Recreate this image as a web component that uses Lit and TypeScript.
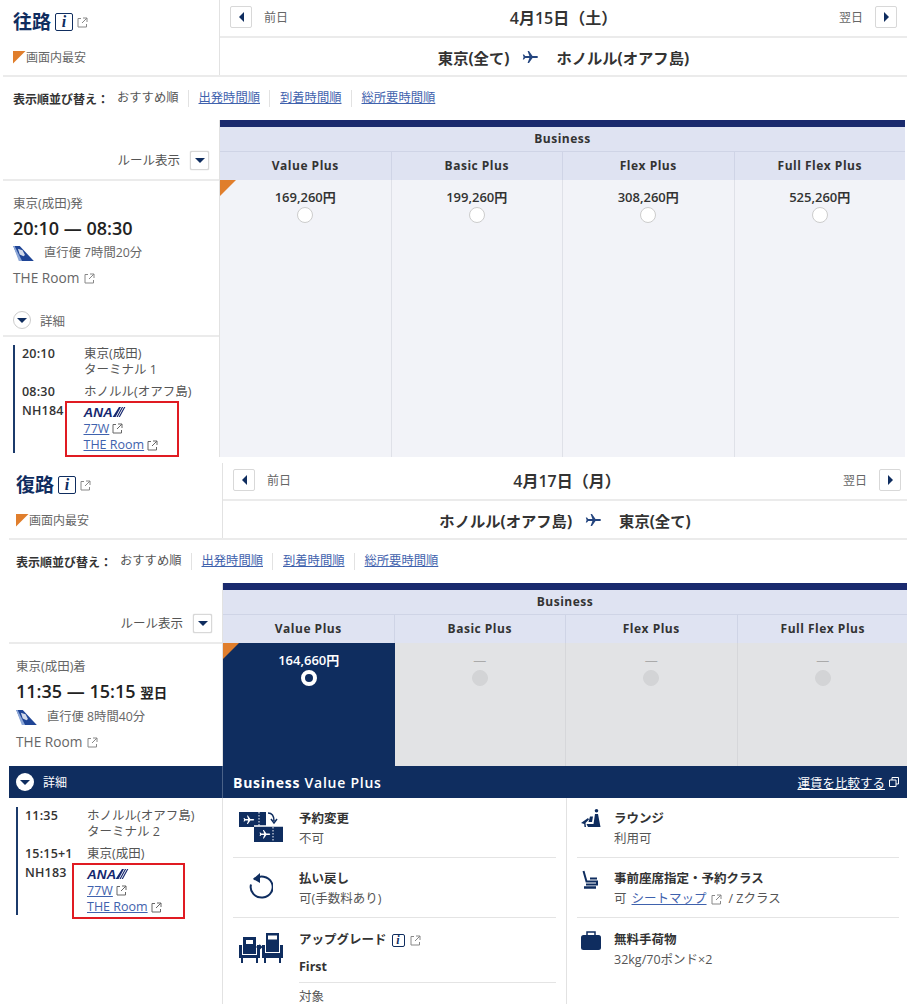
import { LitElement, html, css, svg } from "lit";
import { customElement } from "lit/decorators.js";

const ext = () => html`<svg class="ext" viewBox="0 0 11 11"><path d="M4 1.500H1v8.500h8.500V7M6 1h4v4M10 1L5 6" fill="none" stroke="#888" stroke-width="1"/></svg>`;
const extLink = () => html`<svg class="ext" viewBox="0 0 11 11"><path d="M4 1.500H1v8.500h8.500V7M6 1h4v4M10 1L5 6" fill="none" stroke="#666" stroke-width="1"/></svg>`;
const info = () => html`<span class="info"><i>i</i></span>`;
const plane = (c = "#24457f") => svg`<path fill="${c}" d="M16 6c0-.6-.8-1-1.600-1H10.500L7 0H5.600l1.800 5H3.200L2 3.400H.8L1.600 6 .8 8.600H2L3.200 7h4.200L5.600 12H7l3.500-5h3.900c.8 0 1.600-.4 1.600-1z"/>`;
const tail = () => html`<svg class="tail" viewBox="0 0 22 16"><path d="M0 0h7l15 16H7z" fill="#1f4596"/><path d="M0 0h1.500l8 16H6z" fill="#8ea8d8"/><path d="M5 3l5 1.500 2.500 5-1.500 1.500-4-2z" fill="#fff" opacity=".8"/></svg>`;
const logo = () => html`<span class="logo"><b>ANA</b><svg viewBox="0 0 14 11"><path d="M0 11L7 0h2.200L3.200 11zM4.200 11L10.200 0h1.400L5.600 11zM6.600 11L12.600 0H14L8 11z" fill="#16286f"/></svg></span>`;

@customElement("app-root")
export class AppRoot extends LitElement {
  static styles = css`
    :host { display: block; height: 1004px; overflow: hidden; background: #fff; color: #333;
      font-family: "Open Sans", "Noto Sans CJK JP", sans-serif; font-size: 12.500px; }
    * { box-sizing: border-box; }
    a { color: #3f62ad; text-decoration: underline; }
    svg { display: block; flex: none; }
    .ext { width: 11px; height: 11px; display: inline-block; }
    .panel { --left: 217px; --pad: 10px; --right: 687px; --btn-r: 10px; --table: 685px; margin-left: 3px; }
    .panel.b { --left: 214px; --pad: 7px; --right: 684px; --btn-r: 6px; --table: 684px; margin-left: 9px; margin-top: 6px; }
    .panel.a { height: 457px; }
    .head { display: flex; height: 77px; border-bottom: 2px solid #ebebeb; width: calc(var(--left) + var(--right)); }
    .head-l { width: var(--left); border-right: 1px solid #e2e2e2; padding-left: var(--pad); flex: none; }
    .title { display: flex; align-items: center; height: 44px; }
    .title h2 { margin: 0; font-size: 19px; font-weight: 700; color: #0f2d5f; width: 42px; line-height: 24px; }
    .info { width: 18px; height: 18px; border: 1.500px solid #0f2d5f; border-radius: 2px; display: inline-flex; align-items: center; justify-content: center; color: #0f2d5f; font: italic 700 16px "Liberation Serif", serif; }
    .title .ext { margin-left: 4px; }
    .low { display: flex; align-items: center; height: 24px; margin-top: 1px; color: #666; font-size: 12px; }
    .low span.tri { width: 13px; height: 13px; background: #e07e2c; clip-path: polygon(0 0, 100% 0, 0 100%); }
    .head-r { width: var(--right); display: flex; flex-direction: column; }
    .date { height: 38px; border-bottom: 2px solid #ebebeb; display: grid; grid-template-columns: 1fr auto 1fr; align-items: center; padding: 0 var(--btn-r) 3px 10px; }
    .date .prev, .date .next { display: flex; align-items: center; gap: 12px; color: #666; font-size: 12px; }
    .date .next { justify-content: flex-end; }
    .date b { font-size: 16px; color: #333; font-weight: 600; }
    .sq { width: 22px; height: 22px; border: 1px solid #d8d8d8; border-radius: 2px; background: #fff; display: flex; align-items: center; justify-content: center; }
    .route { flex: 1; display: flex; align-items: center; justify-content: center; font-size: 15.300px; font-weight: 700; color: #333; gap: 13px; }
    .route svg { width: 16px; height: 12px; margin-right: 5px; }
    .sort { height: 43px; display: flex; align-items: center; padding-left: var(--pad); color: #555; font-size: 12.300px; }
    .sort b { color: #333; width: 104px; font-size: 12px; }
    .sort span, .sort a { padding: 0 9px 0 10px; border-left: 1px solid #e2e2e2; line-height: 16px; height: 17px; }
    .sort span:first-of-type { border: 0; padding-left: 0; }
    .main { display: flex; }
    .lcol { width: var(--left); flex: none; border-right: 1px solid #e2e2e2; }
    .rule { height: 61px; border-bottom: 2px solid #ebebeb; display: flex; align-items: flex-end; justify-content: flex-end; gap: 10px; padding: 0 10px 9px 0; color: #555; }
    .rule span { line-height: 18px; }
    .rule .sq { width: 19px; height: 19px; box-shadow: 0 0 1px #aaa; }
    .fl { padding-left: var(--pad); color: #666; }
    .fl .from { line-height: 20px; margin-top: 13px; }
    .fl .time { line-height: 28px; font-size: 18px; font-weight: 600; color: #222; }
    .fl .time small { font-size: 13.500px; font-weight: 700; font-family: "Noto Sans CJK JP", sans-serif; }
    .fl .dur { line-height: 22px; display: flex; align-items: center; gap: 10px; font-size: 12.300px; }
    .tail { width: 21px; height: 15px; }
    .fl .room { line-height: 28px; font-size: 13.700px; display: flex; align-items: center; gap: 5px; }
    .toggle { height: 32px; margin-top: 13px; border-bottom: 2px solid #ebebeb; padding-left: var(--pad); display: flex; align-items: center; gap: 9px; color: #666; }
    .circ { width: 18px; height: 18px; border-radius: 50%; border: 1px solid #ccc; display: flex; align-items: center; justify-content: center; background: #fff; }
    .tri-d { width: 0; height: 0; border-left: 5px solid transparent; border-right: 5px solid transparent; border-top: 5px solid #0f2d5f; }
    .tri-l { width: 0; height: 0; border-top: 5px solid transparent; border-bottom: 5px solid transparent; border-right: 5px solid #0f2d5f; }
    .tri-r { width: 0; height: 0; border-top: 5px solid transparent; border-bottom: 5px solid transparent; border-left: 5px solid #0f2d5f; }
    .legs { margin: 8px 0 0 var(--pad); height: 108px; border-left: 2px solid #1b3a6b; padding: 1px 0 0 7px; color: #555; line-height: 16px; }
    .leg { display: grid; grid-template-columns: 62px 1fr; margin-bottom: 6px; }
    .leg b, .nh > b { color: #333; font-weight: 600; font-size: 12.500px; letter-spacing: .2px; }
    .nh { display: flex; margin-top: -5px; }
    .nh > b { line-height: 16px; padding-top: 2px; width: 42.500px; }
    .b .nh > b { width: 47px; }
    .redbox { border: 2px solid #e01b22; width: 114px; height: 55.500px; padding: 1px 0 0 17px; }
    .b .redbox { width: 113px; padding-left: 13px; }
    .redbox div { height: 16.500px; display: flex; align-items: center; gap: 3px; }
    .logo { display: flex; align-items: center; color: #16286f; font: italic 700 13.500px "Liberation Sans", sans-serif; height: 16px; }
    .logo svg { width: 14px; height: 10px; margin-left: -1px; }
    .tab { width: var(--table); overflow: hidden; flex: none; }
    .tab .bar { height: 7px; background: #1a2a6e; }
    .tab .cls { height: 24px; background: #dfe3f2; text-align: center; line-height: 24px; font-size: 12px; font-weight: 700; color: #333; letter-spacing: .5px; }
    .cols { display: grid; grid-template-columns: repeat(4, 171.500px); }
    .cols .h { height: 29px; background: #dfe3f2; border-top: 1px solid #cfd4e6; border-right: 1px solid #cfd4e6; text-align: center; line-height: 28px; font-size: 12px; font-weight: 700; color: #333; letter-spacing: .5px; }
    .c { position: relative; border-right: 1px solid #dfe1e8; background: #f2f3f8; text-align: center; height: 277px; padding-top: 7px; font-size: 13px; font-weight: 600; color: #333; line-height: 20px; }
    .b .c { height: 123px; }
    .c.on { background: #0f2d5f; color: #fff; border-right: 0; }
    .c.off { background: #e2e3e5; border-right: 1px solid #d6d7da; color: #aaa; font-weight: 400; }
    .c .corner { position: absolute; left: 0; top: 0; width: 16px; height: 16px; background: #e07e2c; clip-path: polygon(0 0, 100% 0, 0 100%); }
    .radio { width: 16px; height: 16px; border-radius: 50%; margin: 0 auto; background: #fff; border: 1px solid #ccc; }
    .on .radio { border: 4px solid #fff; background: #0f2d5f; }
    .off .radio { background: #d3d4d6; border-color: #d3d4d6; }
    .fbar { height: 32px; background: #0f2d5f; color: #fff; display: flex; align-items: center; width: 898px; }
    .fbar .l { width: var(--left); flex: none; height: 100%; display: flex; align-items: center; gap: 9px; padding-left: var(--pad); border-right: 1px solid #4a6288; font-size: 12px; }
    .fbar .l .circ { border: 0; }
    .fbar .t { padding-left: 10px; font-size: 14px; flex: 1; letter-spacing: .75px; font-weight: 600; }
    .fbar .t b { font-weight: 700; }
    .fbar a { color: #fff; font-size: 12.500px; }
    .fbar .cmp { display: flex; align-items: center; gap: 4px; padding-right: 8px; }
    .fbar .cmp svg { width: 10px; height: 10px; }
    .lower { display: flex; height: 220px; }
    .lower .lcol { height: 220px; }
    .lower .legs { margin-top: 9px; }
    .grid2 { display: grid; grid-template-columns: 343px 341px; width: var(--table); }
    .gcol { padding: 0 10px; }
    .gcol + .gcol { border-left: 1.500px solid #e2e2e2; padding-right: 8px; }
    .row { display: flex; height: 60px; border-bottom: 1px solid #e4e4e4; padding-top: 11px; line-height: 20px; color: #555; }
    .row.last { border: 0; height: auto; padding-top: 12px; }
    .ic { flex: none; width: 66px; }
    .gcol + .gcol .ic { width: 37px; padding-left: 4px; }
    .row h4 { margin: 0; font-size: 12.500px; font-weight: 700; color: #333; display: flex; align-items: center; gap: 5px; }
    .row h4 .info { width: 13px; height: 13px; font-size: 12px; border-width: 1px; }
    .row .val { display: flex; align-items: center; gap: 4px; }
    .row .val a { margin-left: 1px; }
    .row .val span { margin-left: 3px; }
    .row .first { margin-top: 7px; font-weight: 700; color: #333; padding-bottom: 5px; border-bottom: 1px solid #e4e4e4; width: 257px; }
    .row .obj { margin-top: 7px; line-height: 14px; }
    .row .body { flex: 1; }
    .tk { margin: 3px 0 0 6px; }
    .rf { margin: 4px 0 0 15px; }
    .m1 { margin-top: 1px; }
  `;

  private header(title: string, date: string, from: string, to: string) {
    return html`<div class="head">
      <div class="head-l">
        <div class="title"><h2>${title}</h2>${info()}${ext()}</div>
        <div class="low"><span class="tri"></span>画面内最安</div>
      </div>
      <div class="head-r">
        <div class="date">
          <div class="prev"><span class="sq"><span class="tri-l"></span></span>前日</div>
          <b>${date}</b>
          <div class="next">翌日<span class="sq"><span class="tri-r"></span></span></div>
        </div>
        <div class="route">${from}<svg viewBox="0 0 16 12">${plane()}</svg>${to}</div>
      </div>
    </div>
    <div class="sort"><b>表示順並び替え：</b><span>おすすめ順</span><a href="#">出発時間順</a><a href="#">到着時間順</a><a href="#">総所要時間順</a></div>`;
  }

  private tableHead() {
    return html`<div class="bar"></div><div class="cls">Business</div>
      <div class="cols">${["Value Plus", "Basic Plus", "Flex Plus", "Full Flex Plus"].map((n) => html`<div class="h">${n}</div>`)}</div>`;
  }

  private flight(from: string, time: unknown, dur: string) {
    return html`<div class="rule"><span>ルール表示</span><span class="sq"><span class="tri-d"></span></span></div>
      <div class="fl">
        <div class="from">${from}</div>
        <div class="time">${time}</div>
        <div class="dur">${tail()}${dur}</div>
        <div class="room">THE Room ${ext()}</div>
      </div>`;
  }

  private legs(rows: [string, unknown][], nh: string) {
    return html`<div class="legs">
      ${rows.map(([t, d]) => html`<div class="leg"><b>${t}</b><span>${d}</span></div>`)}
      <div class="nh"><b>${nh}</b>
        <div class="redbox">
          <div>${logo()}</div>
          <div><a href="#">77W</a>${extLink()}</div>
          <div><a href="#">THE Room</a>${extLink()}</div>
        </div>
      </div>
    </div>`;
  }

  private lowerIcons = {
    ticket: svg`<g fill="#0f2d5f"><path d="M0 0h27v15H0zM15 14h29v16H15z"/></g>
      <path d="M15 14h29" stroke="#fff" stroke-width="1.500"/>
      <path d="M20 0v14M34 15v15" stroke="#fff" stroke-dasharray="1.500 1.500"/>
      <path d="M29 1c4 0 6 3 6 8M32 7l3 4 3-4" fill="none" stroke="#0f2d5f" stroke-width="1.500"/>
      <g transform="translate(4 3.500) scale(.7)">${plane("#fff")}</g><g transform="translate(20 18) scale(.7)">${plane("#fff")}</g>`,
    refund: svg`<path d="M6 6.500a11 10.500 0 1 1-3 5" fill="none" stroke="#0f2d5f" stroke-width="2"/><path d="M12 0L5 6l7 4z" fill="#0f2d5f"/>`,
    upgrade: svg`<g fill="#0f2d5f"><path d="M4 4h13v17H4zM0 12h3v13H0zM18 12h3v13h-3zM1 22h19v3H1zM2 25h2v5H2zM17 25h2v5h-2z"/>
      <path d="M27 0h13v19H27zM23 12h3v13h-3zM41 12h3v13h-3zM24 20h19v5H24zM25 25h2v5h-2zM40 25h2v5h-2zM17.500 13h3v-2l3 3-3 3v-2h-3z"/></g>
      <path d="M7 7h7v4H7zM29 2.500h9v4h-9z" fill="#fff"/>`,
    lounge: svg`<g fill="#0f2d5f"><circle cx="15.500" cy="1.800" r="1.800"/><path d="M14 5h3l2.500 13H7l-1.500-3h7z"/><path d="M0 14l7-5 1 1.500-3.500 3.500.5 4H3.500l-.3-3zM9 7.500l3 0-1 5.500H7.500z"/></g>`,
    seat: svg`<path d="M2.500 1l3 10.500h10.500V14.500H5M9 8.500h7" fill="none" stroke="#0f2d5f" stroke-width="2"/><path d="M3 17.500h12" stroke="#0f2d5f" stroke-width="2.500"/>`,
    bag: svg`<rect x="0" y="4" width="20" height="15" rx="2.500" fill="#0f2d5f"/><path d="M6 4V1h8v3" fill="none" stroke="#0f2d5f" stroke-width="1.500"/>`,
  };

  render() {
    const I = this.lowerIcons;
    return html`
      <div class="panel a">
        ${this.header("往路", "4月15日（土）", "東京(全て)", "ホノルル(オアフ島)")}
        <div class="main">
          <div class="lcol">
            ${this.flight("東京(成田)発", "20:10 — 08:30", "直行便 7時間20分")}
            <div class="toggle"><span class="circ"><span class="tri-d"></span></span>詳細</div>
            ${this.legs([["20:10", html`東京(成田)<br />ターミナル 1`], ["08:30", "ホノルル(オアフ島)"]], "NH184")}
          </div>
          <div class="tab">
            ${this.tableHead()}
            <div class="cols">
              ${["169,260円", "199,260円", "308,260円", "525,260円"].map((p, i) => html`<div class="c">
                ${i === 0 ? html`<span class="corner"></span>` : ""}${p}<div class="radio"></div></div>`)}
            </div>
          </div>
        </div>
      </div>

      <div class="panel b">
        ${this.header("復路", "4月17日（月）", "ホノルル(オアフ島)", "東京(全て)")}
        <div class="main">
          <div class="lcol">${this.flight("東京(成田)着", html`11:35 — 15:15 <small>翌日</small>`, "直行便 8時間40分")}</div>
          <div class="tab">
            ${this.tableHead()}
            <div class="cols">
              <div class="c on"><span class="corner"></span>164,660円<div class="radio"></div></div>
              ${[0, 1, 2].map(() => html`<div class="c off">—<div class="radio"></div></div>`)}
            </div>
          </div>
        </div>
        <div class="fbar">
          <div class="l"><span class="circ"><span class="tri-d"></span></span>詳細</div>
          <div class="t"><b>Business</b> Value Plus</div>
          <div class="cmp"><a href="#">運賃を比較する</a><svg viewBox="0 0 10 10"><path d="M3 3V.5h6.500V7H7M.5 3H7v6.500H.5z" fill="none" stroke="#fff"/></svg></div>
        </div>
        <div class="lower">
          <div class="lcol">${this.legs([["11:35", html`ホノルル(オアフ島)<br />ターミナル 2`], ["15:15+1", "東京(成田)"]], "NH183")}</div>
          <div class="grid2">
            <div class="gcol">
              <div class="row"><span class="ic"><svg class="tk" width="44" height="30" viewBox="0 0 44 30">${I.ticket}</svg></span><div class="body"><h4>予約変更</h4><div>不可</div></div></div>
              <div class="row"><span class="ic"><svg class="rf" width="25" height="27" viewBox="0 0 25 27">${I.refund}</svg></span><div class="body"><h4>払い戻し</h4><div>可(手数料あり)</div></div></div>
              <div class="row last"><span class="ic"><svg class="tk" width="44" height="30" viewBox="0 0 44 30">${I.upgrade}</svg></span><div class="body"><h4>アップグレード ${info()}${ext()}</h4><div class="first">First</div><div class="obj">対象</div></div></div>
            </div>
            <div class="gcol">
              <div class="row"><span class="ic"><svg width="20" height="19" viewBox="0 0 20 19">${I.lounge}</svg></span><div class="body"><h4>ラウンジ</h4><div>利用可</div></div></div>
              <div class="row"><span class="ic"><svg class="m1" width="18" height="19" viewBox="0 0 18 19">${I.seat}</svg></span><div class="body"><h4>事前座席指定・予約クラス</h4><div class="val">可 <a href="#">シートマップ</a>${ext()} <span>/ Zクラス</span></div></div></div>
              <div class="row last"><span class="ic"><svg class="m1" width="20" height="19" viewBox="0 0 20 19">${I.bag}</svg></span><div class="body"><h4>無料手荷物</h4><div>32kg/70ポンド×2</div></div></div>
            </div>
          </div>
        </div>
      </div>
    `;
  }
}
